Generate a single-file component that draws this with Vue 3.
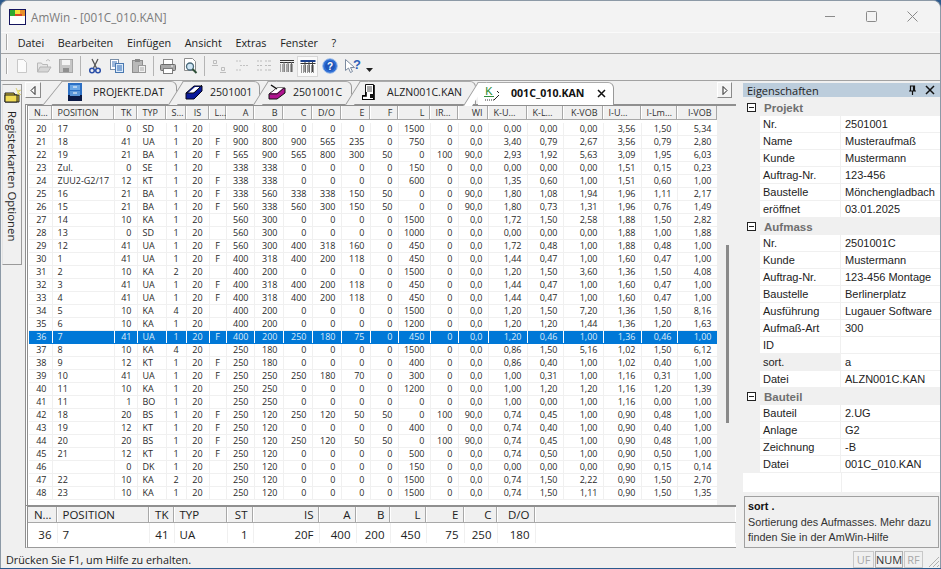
<script setup>
const colBounds = [29,52,114,137,166,186,209,226,254,283,312,341,370,398,430,458,488,527,563,603,641,677,717]
const widths = colBounds.slice(1).map((b, i) => b - colBounds[i])
const heads = ['N…','POSITION','TK','TYP','S…','IS','L…','A','B','C','D/O','E','F','L','IR…','WI','K-U…','K-L…','K-VOB','I-U…','I-Lm…','I-VOB']
const headAlign = ['hc','hl','hr','hl','hl','hc','hl','hr','hr','hr','hc','hr','hr','hr','hl','hr','hl','hl','hr','hl','hl','hr']
const cellAlign = ['r','l','r','l','c','c','c','r','r','r','r','r','r','r','r','r','r','r','r','r','r','r']
const raw = `20|17|0|SD|1|20||900|800|0|0|0|0|1500|0|0,0|0,00|0,00|0,00|3,56|1,50|5,34
21|18|41|UA|1|20|F|900|800|900|565|235|0|750|0|0,0|3,40|0,79|2,67|3,56|0,79|2,80
22|19|21|BA|1|20|F|565|900|565|800|300|50|0|100|90,0|2,93|1,92|5,63|3,09|1,95|6,03
23|Zul.|0|SE|1|20||338|338|0|0|0|0|150|0|0,0|0,00|0,00|0,00|1,51|0,15|0,23
24|ZUU2-G2/17|12|KT|1|20|F|338|338|0|0|0|0|600|0|0,0|1,35|0,60|1,00|1,51|0,60|1,00
25|16|21|BA|1|20|F|338|560|338|338|150|50|0|0|90,0|1,80|1,08|1,94|1,96|1,11|2,17
26|15|21|BA|1|20|F|560|338|560|300|150|50|0|0|90,0|1,80|0,73|1,31|1,96|0,76|1,49
27|14|10|KA|1|20||560|300|0|0|0|0|1500|0|0,0|1,72|1,50|2,58|1,88|1,50|2,82
28|13|0|SD|1|20||560|300|0|0|0|0|1000|0|0,0|0,00|0,00|0,00|1,88|1,00|1,88
29|12|41|UA|1|20|F|560|300|400|318|160|0|450|0|0,0|1,72|0,48|1,00|1,88|0,48|1,00
30|1|41|UA|1|20|F|400|318|400|200|118|0|450|0|0,0|1,44|0,47|1,00|1,60|0,47|1,00
31|2|10|KA|2|20||400|200|0|0|0|0|1500|0|0,0|1,20|1,50|3,60|1,36|1,50|4,08
32|3|41|UA|1|20|F|400|318|400|200|118|0|450|0|0,0|1,44|0,47|1,00|1,60|0,47|1,00
33|4|41|UA|1|20|F|400|318|400|200|118|0|450|0|0,0|1,44|0,47|1,00|1,60|0,47|1,00
34|5|10|KA|4|20||400|200|0|0|0|0|1500|0|0,0|1,20|1,50|7,20|1,36|1,50|8,16
35|6|10|KA|1|20||400|200|0|0|0|0|1200|0|0,0|1,20|1,20|1,44|1,36|1,20|1,63
36|7|41|UA|1|20|F|400|200|250|180|75|0|450|0|0,0|1,20|0,46|1,00|1,36|0,46|1,00
37|8|10|KA|4|20||250|180|0|0|0|0|1500|0|0,0|0,86|1,50|5,16|1,02|1,50|6,12
38|9|12|KT|1|20|F|250|180|0|0|0|0|400|0|0,0|0,86|0,40|1,00|1,02|0,40|1,00
39|10|41|UA|1|20|F|250|250|250|180|70|0|300|0|0,0|1,00|0,31|1,00|1,16|0,31|1,00
40|11|10|KA|1|20||250|250|0|0|0|0|1200|0|0,0|1,00|1,20|1,20|1,16|1,20|1,39
41|11|1|BO|1|20||250|250|0|0|0|0|0|0|0,0|1,00|0,00|1,00|1,16|0,00|1,00
42|18|20|BS|1|20|F|250|120|250|120|50|50|0|100|90,0|0,74|0,45|1,00|0,90|0,48|1,00
43|19|12|KT|1|20|F|250|120|0|0|0|0|400|0|0,0|0,74|0,40|1,00|0,90|0,40|1,00
44|20|20|BS|1|20|F|250|120|250|120|50|50|0|100|90,0|0,74|0,45|1,00|0,90|0,48|1,00
45|21|12|KT|1|20|F|250|120|0|0|0|0|500|0|0,0|0,74|0,50|1,00|0,90|0,50|1,00
46||0|DK|1|20||250|120|0|0|0|0|150|0|0,0|0,00|0,00|0,00|0,90|0,15|0,14
47|22|10|KA|2|20||250|120|0|0|0|0|1500|0|0,0|0,74|1,50|2,22|0,90|1,50|2,70
48|23|10|KA|1|20||250|120|0|0|0|0|1500|0|0,0|0,74|1,50|1,11|0,90|1,50|1,35`
const rows = raw.split('\n').map(l => l.split('|'))

const bBounds = [28,57,149,174,227,253,319,356,390,426,464,497,535]
const bWidths = bBounds.slice(1).map((b, i) => b - bBounds[i])
const bHeads = ['N…','POSITION','TK','TYP','ST','IS','A','B','L','E','C','D/O']
const bVals = ['36','7','41','UA','1','20F','400','200','450','75','250','180']
const bAlign = ['r','lw','r','lw','r','r','r','r','r','r','r','r']

const menu = ['Datei','Bearbeiten','Einfügen','Ansicht','Extras','Fenster','?']
const props = [
  { title: 'Projekt', items: [['Nr.','2501001'],['Name','Musteraufmaß'],['Kunde','Mustermann'],['Auftrag-Nr.','123-456'],['Baustelle','Mönchengladbach'],['eröffnet','03.01.2025']] },
  { title: 'Aufmass', items: [['Nr.','2501001C'],['Kunde','Mustermann'],['Auftrag-Nr.','123-456 Montage'],['Baustelle','Berlinerplatz'],['Ausführung','Lugauer Software'],['Aufmaß-Art','300'],['ID',''],['sort.','a'],['Datei','ALZN001C.KAN']] },
  { title: 'Bauteil', items: [['Bauteil','2.UG'],['Anlage','G2'],['Zeichnung','-B'],['Datei','001C_010.KAN']] },
]
</script>

<template>
  <div class="window">
    <header class="titlebar">
      <svg class="appicon" width="17" height="16" viewBox="0 0 17 16">
        <rect x="0.5" y="0.5" width="16" height="15" fill="#fff" stroke="#14145e"/>
        <rect x="1" y="1" width="5" height="6" fill="#2fa82f"/>
        <rect x="6" y="1" width="5" height="6" fill="#f4e23a"/>
        <rect x="11" y="1" width="5" height="6" fill="#e8912e"/>
        <rect x="6" y="5" width="7" height="2" fill="#d8442c"/>
      </svg>
      <span class="title-text">AmWin - [001C_010.KAN]</span>
      <div class="winbtns">
        <svg width="11" height="11" viewBox="0 0 11 11"><path d="M0 5.5h10" stroke="#8a8a8a"/></svg>
        <svg width="11" height="11" viewBox="0 0 11 11"><rect x="0.5" y="0.5" width="10" height="10" fill="none" stroke="#8a8a8a" rx="1"/></svg>
        <svg width="11" height="11" viewBox="0 0 11 11"><path d="M0.5 0.5l10 10M10.5 0.5l-10 10" stroke="#8a8a8a"/></svg>
      </div>
    </header>

    <nav class="menubar">
      <i class="grip"></i>
      <span v-for="m in menu" :key="m" class="menu-item">{{ m }}</span>
    </nav>

    <div class="toolbar">
      <i class="grip"></i>
      <div class="tb-group first">
        <svg class="ti" viewBox="0 0 16 16"><path d="M3.500 1.500h6l3 3v10h-9z" fill="#fbfbfb" stroke="#c8c8c8"/></svg>
        <svg class="ti" viewBox="0 0 16 16"><path d="M1.500 14V5h4l1 1.500h5V9" fill="#e6e6e6" stroke="#b8b8b8"/><path d="M1.500 14l2.500-5h11l-3 5z" fill="#d6d6d6" stroke="#b4b4b4"/><path d="M10 3l2-1.500 2 1.500" fill="none" stroke="#bcbcbc"/></svg>
        <svg class="ti" viewBox="0 0 16 16"><rect x="1.500" y="1.500" width="13" height="13" fill="#c6c6c6" stroke="#a8a8a8"/><rect x="4" y="2" width="8" height="5" fill="#f4f4f4"/><rect x="5" y="10" width="6" height="4" fill="#8f8f8f"/></svg>
      </div>
      <i class="tsep"></i>
      <div class="tb-group">
        <svg class="ti" viewBox="0 0 16 16"><path d="M5 1l4.500 9M11 1L6.500 10" stroke="#555" stroke-width="1.300" fill="none"/><circle cx="5" cy="12.500" r="2.300" fill="none" stroke="#2b4fa8" stroke-width="1.500"/><circle cx="11" cy="12.500" r="2.300" fill="none" stroke="#2b4fa8" stroke-width="1.500"/></svg>
        <svg class="ti" viewBox="0 0 16 16"><rect x="1.500" y="1.500" width="8" height="10" fill="#fff" stroke="#7a8fa8"/><path d="M3 4h5M3 6h5M3 8h5" stroke="#3c72b8"/><rect x="6.500" y="5.500" width="8" height="9" fill="#dcebfa" stroke="#4a78b0"/><path d="M8 8h5M8 10h5M8 12h5" stroke="#2d68b4"/></svg>
        <svg class="ti" viewBox="0 0 16 16"><rect x="1.500" y="2.500" width="10" height="12" fill="#b9b9b9" stroke="#8e8e8e"/><rect x="4" y="1" width="5" height="3" fill="#8a8a8a"/><rect x="7.500" y="7.500" width="7" height="7" fill="#f0f0f0" stroke="#9a9a9a"/><path d="M9 10h4M9 12h4" stroke="#aaa"/></svg>
      </div>
      <i class="tsep"></i>
      <div class="tb-group">
        <svg class="ti" viewBox="0 0 16 16"><rect x="3.500" y="1.500" width="9" height="5" fill="#fff" stroke="#8a8a8a"/><rect x="0.500" y="6.500" width="15" height="6" rx="1" fill="#a8a8a8" stroke="#6c6c6c"/><rect x="3.500" y="10.500" width="9" height="5" fill="#fff" stroke="#7c7c7c"/><path d="M11 8h2" stroke="#f4f4f4"/></svg>
        <svg class="ti" viewBox="0 0 16 16"><path d="M2.500 0.500h8l3 3v9h-11z" fill="#fff" stroke="#8d8d8d"/><circle cx="8" cy="8.500" r="3.500" fill="#cfe6f5" stroke="#4a6a7a" stroke-width="1.300"/><path d="M10.500 11l4 4" stroke="#2f4f38" stroke-width="2"/></svg>
      </div>
      <i class="tsep"></i>
      <div class="tb-group tight">
        <svg class="ti" viewBox="0 0 16 16"><path d="M2.500 2.500h3v3h-3zM1 7.500h6M10.500 9.500h3v3h-3zM9 14.500h6" fill="none" stroke="#bdbdbd"/></svg>
        <svg class="ti" viewBox="0 0 16 16"><path d="M2 3h2M5 3h2M6 7.500h2M9 7.500h2M2 12h2M5 12h2M12 7.500h2" stroke="#c2c2c2"/></svg>
        <svg class="ti" viewBox="0 0 16 16"><path d="M1 3h2M4 3h2M9 3h2M12 3h3M1 7.500h2M4 7.500h2M9 7.500h2M12 7.500h3M1 12h2M4 12h2M9 12h2M12 12h3" stroke="#bcbcbc"/></svg>
        <svg class="ti" viewBox="0 0 16 16"><path d="M1 2.500h14M1 4.500h14" stroke="#333"/><path d="M1 7h14M1 9h14M1 11h14M1 13h14" stroke="#555" stroke-dasharray="1 1"/><path d="M5 4v10M9 4v10M12.500 4v10" stroke="#666"/></svg>
      </div>
      <div class="tb-active">
        <svg class="ti" viewBox="0 0 16 16"><path d="M0.500 3h15" stroke="#1b3f8c" stroke-width="2"/><path d="M0.500 5.500h15" stroke="#333"/><path d="M1 8h14M1 10h14M1 12h14M1 14h14" stroke="#333" stroke-dasharray="1 1"/><path d="M5 4v10M9 4v10M12.500 4v10" stroke="#444"/></svg>
      </div>
      <svg class="ti help" viewBox="0 0 16 16"><circle cx="8" cy="8" r="7.300" fill="#2f6fd6" stroke="#9dbce8"/><circle cx="8" cy="8" r="5" fill="#1f55b8"/><text x="8" y="12" text-anchor="middle" class="qm">?</text></svg>
      <svg class="ti pointer" viewBox="0 0 18 16"><path d="M1.500 1.500v11l3-2.500 2 4.500 2-1-2-4h4z" fill="#fff" stroke="#7c8ba0"/><text x="13" y="11" text-anchor="middle" class="qm2">?</text></svg>
      <svg class="drop" width="8" height="6" viewBox="0 0 8 6"><path d="M0 1l3.500 4L7 1z" fill="#222"/></svg>
    </div>

    <main class="main">
      <aside class="leftstrip">
        <div class="lefttab">
          <svg width="17" height="16" viewBox="0 0 17 16"><path d="M1 6h9l1 2h4v7H1z" fill="#e2c936" stroke="#1e1e1e"/><path d="M1 15V8h12v7z" fill="#f1dc55" stroke="#1e1e1e"/><path d="M12 1l1.500 3 3-1-2 2.500 2 2-3-.5" fill="#f7f28a" stroke="#c9b838" stroke-width=".6"/></svg>
          <span class="lefttext">Registerkarten Optionen</span>
        </div>
      </aside>

      <section class="center">
        <div class="tabstrip">
          <button class="scrollbtn">
            <svg width="6" height="9" viewBox="0 0 6 9"><path d="M5 .5v8L1 4.500z" fill="#fff" stroke="#222"/></svg>
          </button>
          <div class="tab t1">
            <svg class="tabicon" width="16" height="18" viewBox="0 0 16 18"><rect x="1" y="0" width="14" height="18" fill="#2b6fc4"/><rect x="1" y="12" width="14" height="6" fill="#0b1a45"/><rect x="3" y="2" width="10" height="5" fill="#6aa6e4"/><rect x="3" y="8" width="10" height="5" fill="#5b96d8"/><path d="M6 4h4M6 10h4" stroke="#fff"/></svg>
            <span>PROJEKTE.DAT</span>
          </div>
          <div class="tab t2">
            <svg class="tabicon" width="18" height="15" viewBox="0 0 18 15"><path d="M1 8l8-7h8v5l-8 8H1z" fill="#0a1a9a" stroke="#05051e"/><path d="M3 8l7-6h5l-7 6z" fill="#fff"/><path d="M1 8h8l8-8" fill="none" stroke="#111"/></svg>
            <span>2501001</span>
          </div>
          <div class="tab t3">
            <svg class="tabicon" width="18" height="16" viewBox="0 0 18 16"><path d="M1 10l8-6h8v5l-8 6H1z" fill="#b0128f" stroke="#111"/><path d="M2 10h7l7-6" fill="none" stroke="#222"/><path d="M3 9l6-5h6l-6 5z" fill="#fff"/><path d="M3 1l6 4" stroke="#111" stroke-width="1.500"/></svg>
            <span>2501001C</span>
          </div>
          <div class="tab t4">
            <svg class="tabicon" width="14" height="16" viewBox="0 0 14 16"><path d="M3.500.5h8v15h-11v-4h3z" fill="#fff" stroke="#111"/><path d="M5 3h5M5 5h5M5 7h5" stroke="#555"/><path d="M0 12h4V8M12 1v15H0v-3" fill="none" stroke="#000" stroke-width="1.600"/><rect x="8" y="10" width="4" height="4" fill="#111"/></svg>
            <span>ALZN001C.KAN</span>
          </div>
          <div class="tab t5">
            <svg class="tabicon" width="17" height="17" viewBox="0 0 17 17"><text x="5" y="10" text-anchor="middle" class="kglyph">K</text><path d="M0 11.500h10" stroke="#2e8b3a"/><path d="M1 15h9" stroke="#333" stroke-dasharray="1 1"/><path d="M10 15l5-5M13 6l2 2" stroke="#222"/></svg>
            <span class="t5name">001C_010.KAN</span>
            <svg class="tabx" width="9" height="9" viewBox="0 0 9 9"><path d="M1 1l7 7M8 1l-7 7" stroke="#111" stroke-width="1.500"/></svg>
          </div>
          <button class="scrollbtn right">
            <svg width="6" height="9" viewBox="0 0 6 9"><path d="M1 .5v8l4-4z" fill="#fff" stroke="#222"/></svg>
          </button>
        </div>

        <div class="gridframe">
          <div class="tablewrap">
            <table class="grid">
              <colgroup><col v-for="(w, i) in widths" :key="i" :style="{ width: w + 'px' }"></colgroup>
              <thead>
                <tr><th v-for="(h, i) in heads" :key="i" :class="headAlign[i]">{{ h }}</th></tr>
                <tr class="spacer"><td :colspan="heads.length"></td></tr>
              </thead>
              <tbody>
                <tr v-for="r in rows" :key="r[0]" :class="{ sel: r[0] === '36' }">
                  <td v-for="(c, i) in r" :key="i" :class="cellAlign[i]">{{ c }}</td>
                </tr>
              </tbody>
            </table>
          </div>
          <div class="vscroll"><div class="thumb"></div></div>
        </div>

        <div class="bottomgrid">
          <table class="bgrid">
            <colgroup><col v-for="(w, i) in bWidths" :key="i" :style="{ width: w + 'px' }"><col></colgroup>
            <thead><tr><th v-for="(h, i) in bHeads" :key="i" :class="bAlign[i]">{{ h }}</th><th class="fill"></th></tr></thead>
            <tbody><tr><td v-for="(v, i) in bVals" :key="i" :class="bAlign[i]">{{ v }}</td><td></td></tr></tbody>
          </table>
        </div>
      </section>

      <aside class="panel">
        <div class="panel-title">
          <span>Eigenschaften</span>
          <svg width="9" height="10" viewBox="0 0 9 10"><path d="M2.500 1h4v5h-4zM1 6h7M4.500 6v4M5.500 1v5" fill="none" stroke="#111" stroke-width="1.200"/></svg>
          <svg width="10" height="10" viewBox="0 0 10 10"><path d="M1 1l8 8M9 1l-8 8" stroke="#111" stroke-width="1.500"/></svg>
        </div>
        <div class="propgrid">
          <template v-for="s in props" :key="s.title">
            <div class="sect">
              <svg class="minus" width="9" height="9" viewBox="0 0 9 9"><rect x=".5" y=".5" width="8" height="8" fill="#fff" stroke="#222"/><path d="M2 4.500h5" stroke="#222"/></svg>
              <b>{{ s.title }}</b>
            </div>
            <div v-for="it in s.items" :key="it[0]" class="prow" :class="{ picked: it[0] === 'sort.' }">
              <span class="pname">{{ it[0] }}</span>
              <span class="pval">{{ it[1] }}</span>
            </div>
          </template>
          <div class="pblank"><span></span></div>
        </div>
        <div class="descbox">
          <b>sort .</b>
          <p>Sortierung des Aufmasses. Mehr dazu finden Sie in der AmWin-Hilfe</p>
        </div>
      </aside>
    </main>

    <footer class="statusbar">
      <span class="status-text">Drücken Sie F1, um Hilfe zu erhalten.</span>
      <span class="ind uf">UF</span>
      <span class="ind num">NUM</span>
      <span class="ind rf">RF</span>
      <svg class="sgrip" width="14" height="14" viewBox="0 0 14 14"><path d="M13 3L3 13M13 7l-6 6M13 11l-2 2" stroke="#b0b0b0"/></svg>
    </footer>
  </div>
</template>

<style scoped>
.window {
  width: 941px; height: 568px; background: #f0f0f0; display: flex; flex-direction: column;
  border-radius: 8px 8px 0 0; overflow: hidden; box-sizing: border-box;
  border: 1px solid #8c99a6; border-bottom: 0;
  font-family: "Open Sans", "Noto Sans", sans-serif; color: #1a1a1a;
}
.titlebar { height: 31px; flex: none; display: flex; align-items: center; background: #f3f3f3; padding-left: 8px; }
.appicon { flex: none; }
.title-text { margin-left: 5px; font-size: 11.7px; color: #7b7b7b; }
.winbtns { margin-left: auto; display: flex; gap: 30px; padding-right: 22px; padding-bottom: 1px; }

.menubar { height: 22px; flex: none; box-sizing: border-box; display: flex; align-items: center; gap: 13.700px; border-top: 1px solid #fafafa; border-bottom: 1px solid #a2a2a2; padding: 0 0 2px 5px; font-size: 10.8px; }
.grip { display: block; width: 1px; height: 16px; background: #a8a8a8; border-right: 1px solid #fff; margin-right: -4px; }
.menu-item { color: #202020; }

.toolbar { height: 27px; flex: none; box-sizing: border-box; display: flex; align-items: center; border-bottom: 1px solid #a2a2a2; padding-left: 5px; padding-bottom: 2px; }
.ti { width: 16px; height: 16px; flex: none; }
.tb-group { display: flex; align-items: center; gap: 6px; }
.tb-group.first { margin-left: 10px; }
.tb-group.tight { gap: 6.5px; }
.tsep { display: block; width: 1px; height: 20px; background: #b4b4b4; margin: 0 6px; }
.tb-active { width: 21px; height: 21px; background: #fafafa; border: 1px solid #d8d8d8; box-sizing: border-box; display: flex; align-items: center; justify-content: center; margin-left: 2.500px; }
.help { margin-left: 4px; }
.pointer { width: 18px; margin-left: 6px; }
.drop { margin-left: 4px; margin-top: 7px; }
.qm { font: bold 10px "Liberation Sans", sans-serif; fill: #fff; }
.qm2 { font: bold 13px "Liberation Sans", sans-serif; fill: #2d60b8; }

.main { flex: 1; min-height: 0; display: flex; }
.leftstrip { width: 23px; flex: none; padding: 3px 0 0 1px; box-sizing: border-box; }
.lefttab { width: 20px; height: 181px; border: 1px solid #9a9a9a; border-left: 1px solid #e4e4e4; box-sizing: border-box; display: flex; flex-direction: column; align-items: center; }
.lefttab svg { margin-top: 2px; flex: none; }
.lefttext { writing-mode: vertical-rl; font-size: 11.4px; margin-top: 8px; color: #222; white-space: nowrap; }

.center { width: 719px; flex: none; display: flex; flex-direction: column; }
.tabstrip { height: 23px; flex: none; display: flex; align-items: flex-end; position: relative; padding-left: 1px; font-size: 10.6px; color: #222; }
.scrollbtn { width: 16px; height: 16px; padding: 0; margin-bottom: 6px; flex: none; background: #f4f4f4; border: 1px solid; border-color: #fff #8a8a8a #8a8a8a #fff; display: flex; align-items: center; justify-content: center; }
.scrollbtn.right { width: 15px; margin-left: 103px; }
.tab { position: relative; height: 23px; box-sizing: border-box; padding-bottom: 2px; border-top: 1px solid #aaa; border-right: 1px solid #999; border-top-right-radius: 6px; display: flex; align-items: center; background: #f0f0f0; white-space: nowrap; }
.tab::before { content: ""; position: absolute; left: 0; top: -1px; width: 8px; height: 23px; background: inherit; border-left: 1px solid #999; border-top: 1px solid #aaa; transform-origin: 0 0; transform: skewX(-32deg); }
.tab > * { position: relative; }
.tabicon { flex: none; }
.t1 { width: 115px; margin-left: 21px; }
.t1::before { transform: skewX(-39deg); }
.t1 .tabicon { margin-left: 5px; }
.t1 span { margin-left: 10px; }
.t2 { width: 77px; margin-left: 6px; }
.t2 .tabicon { margin-left: 2px; }
.t2 span { margin-left: 7px; }
.t3 { width: 84px; margin-left: 8px; }
.t3 .tabicon { margin-left: 0; }
.t3 span { margin-left: 7px; }
.t4 { width: 116px; margin-left: 8px; }
.t4 .tabicon { margin-left: 2px; }
.t4 span { margin-left: 11px; }
.t5 { width: 136px; margin-left: 2px; background: #fff; margin-bottom: -1px; z-index: 2; }
.t5 .tabicon { margin-left: 6px; }
.t5name { margin-left: 10px; font-weight: 700; color: #111; }
.tabx { margin-left: 13px; }
.kglyph { font: 11px "Liberation Sans", sans-serif; fill: #1f8a2c; }

.gridframe { flex: 1; min-height: 0; display: flex; margin-left: 1px; width: 711px; border-top: 2px solid #8f8f8f; border-left: 3px double #8f8f8f; box-sizing: border-box; background: #fff; }
.tablewrap { width: 689px; flex: none; padding-left: 1px; box-sizing: border-box; overflow: hidden; }
.grid { table-layout: fixed; border-collapse: collapse; width: 688px; font-size: 9px; line-height: 12px; color: #2a2a2a; }
.grid th { height: 13px; padding: 0 5px; font-weight: 400; background: #f0f0f0; border-right: 1px solid #fff; border-bottom: 1px solid #a8a8a8; box-shadow: inset -1px 0 0 #a8a8a8; white-space: nowrap; overflow: hidden; color: #333; }
.spacer td { height: 3px; padding: 0; border: 0; line-height: 3px; font-size: 0; }
.grid td { padding: 0 5px; border-right: 1px solid #f0f0f0; border-bottom: 1px solid #f0f0f0; white-space: nowrap; overflow: hidden; height: 12px; }
.grid .spacer td { height: 3px; padding: 0; border: 0; }
.hl { text-align: left; }
.hr { text-align: right; }
.hc { text-align: center; }
td.r { text-align: right; }
td.l { text-align: left; }
td.c { text-align: center; padding: 0; }
.grid tr.sel td { background: #0078d7; color: #dcecf9; border-right-color: #fff; border-bottom-color: #0078d7; }
.vscroll { flex: 1; background: #f0f0f0; }
.thumb { width: 3px; height: 178px; margin: 139px 0 0 9px; background: #8a8a8a; }

.bottomgrid { height: 43px; flex: none; margin-left: 1px; width: 711px; box-sizing: border-box; border-top: 2px solid #8f8f8f; border-left: 3px double #8f8f8f; border-bottom: 1px solid #9a9a9a; background: #fff; }
.bgrid { table-layout: fixed; border-collapse: collapse; width: 100%; font-size: 11.5px; color: #222; }
.bgrid th { height: 15px; padding: 0 5px; font-weight: 400; background: #f0f0f0; border-right: 1px solid #fff; box-shadow: inset -1px 0 0 #a8a8a8; border-bottom: 1px solid #a8a8a8; line-height: 14px; }
.bgrid th.fill { box-shadow: none; }
.bgrid td { padding: 2px 5px 0; height: 18px; border-right: 1px solid #f0f0f0; line-height: 17px; }
.bgrid .r { text-align: right; }
.bgrid .lw { text-align: left; padding-left: 5px; }

.panel { flex: 1; min-width: 0; display: flex; flex-direction: column; padding-top: 2px; font-family: "Liberation Sans", sans-serif; font-size: 11px; color: #222; }
.panel-title { height: 14px; flex: none; margin-bottom: 2px; background: #bccddc; display: flex; align-items: center; padding: 0 5px 0 4px; gap: 8px; font: 11px "Open Sans", sans-serif; color: #222; }
.panel-title span { margin-right: auto; }
.propgrid { height: 393px; flex: none; background: #f0f0f0; display: flex; flex-direction: column; }
.sect { height: 17px; flex: none; display: flex; align-items: center; font-size: 11.500px; color: #6f6f6f; }
.minus { margin-left: 4px; margin-right: 8px; }
.prow { height: 17px; flex: none; display: flex; margin-left: 17px; background: #fff; box-sizing: border-box; border-bottom: 1px solid #f0f0f0; line-height: 16px; }
.pname { width: 81px; flex: none; box-sizing: border-box; padding-left: 3px; border-right: 1px solid #f0f0f0; }
.pval { padding-left: 4px; white-space: nowrap; }
.prow.picked .pname { background: #f0f0f0; }
.pblank { flex: 1; background: #fff; }
.pblank span { display: block; width: 98px; height: 100%; border-right: 1px solid #f0f0f0; }
.descbox { margin: 4px 1px 1px 1px; height: 52px; flex: none; box-sizing: border-box; border: 1px solid #a0a0a0; padding: 2px 3px; line-height: 15px; font-size: 10.8px; color: #333; }
.descbox b { display: block; color: #111; }
.descbox p { margin: 1px 0 0; }

.statusbar { height: 20px; flex: none; box-sizing: border-box; display: flex; align-items: center; padding: 3px 0 0 5px; font-size: 10.8px; }
.status-text { margin-right: auto; color: #1c1c1c; }
.ind { height: 17px; box-sizing: border-box; border: 1px solid #c8c8c8; display: flex; align-items: center; justify-content: center; font-size: 11px; }
.uf { width: 21px; color: #a8a8a8; margin-right: 1px; }
.num { width: 28px; color: #333; margin-right: 1px; border-color: #b0b0b0; }
.rf { width: 19px; color: #a8a8a8; }
.sgrip { margin: 2px 0 0 3px; }
</style>

<style>
html, body { margin: 0; background: #2c5a8e; }
</style>
